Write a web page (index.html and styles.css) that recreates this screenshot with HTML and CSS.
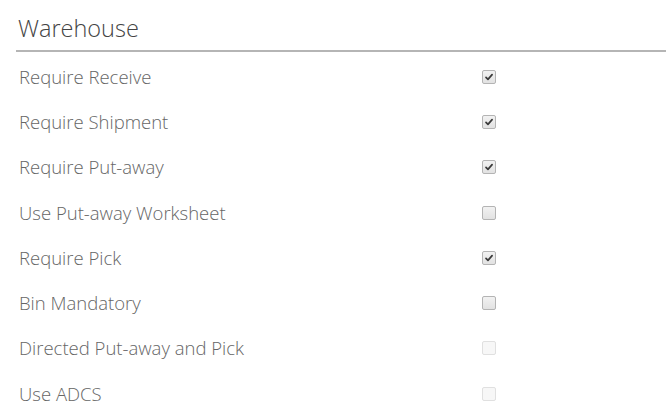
FILE: index.html
```html
<!DOCTYPE html>
<html>
<head>
<meta charset="utf-8">
<link rel="stylesheet" href="styles.css">
</head>
<body>
<section class="group">
  <h1 class="title">Warehouse</h1>
  <div class="rows">
    <div class="row"><span class="label">Require Receive</span><span class="cb checked"><svg viewBox="0 0 14 14"><path d="M3.5 7.4 L5.8 9.8 L10.6 4.2" /></svg></span></div>
    <div class="row"><span class="label">Require Shipment</span><span class="cb checked"><svg viewBox="0 0 14 14"><path d="M3.5 7.4 L5.8 9.8 L10.6 4.2" /></svg></span></div>
    <div class="row"><span class="label">Require Put-away</span><span class="cb checked"><svg viewBox="0 0 14 14"><path d="M3.5 7.4 L5.8 9.8 L10.6 4.2" /></svg></span></div>
    <div class="row"><span class="label">Use Put-away Worksheet</span><span class="cb"></span></div>
    <div class="row"><span class="label">Require Pick</span><span class="cb checked"><svg viewBox="0 0 14 14"><path d="M3.5 7.4 L5.8 9.8 L10.6 4.2" /></svg></span></div>
    <div class="row"><span class="label">Bin Mandatory</span><span class="cb"></span></div>
    <div class="row"><span class="label">Directed Put-away and Pick</span><span class="cb disabled"></span></div>
    <div class="row"><span class="label">Use ADCS</span><span class="cb disabled"></span></div>
  </div>
</section>
</body>
</html>
```
FILE: styles.css
```css
html, body {
  margin: 0;
  padding: 0;
  background: #ffffff;
}
body {
  font-family: "Open Sans", "Noto Sans", sans-serif;
  width: 666px;
  height: 416px;
  overflow: hidden;
}
.group {
  padding: 13px 0 0 16px;
}
.title {
  margin: 0;
  padding: 0 0 7px 2px;
  font-size: 23.5px;
  font-weight: 300;
  line-height: 30px;
  color: #444444;
  border-bottom: 2px solid #b5b5b5;
}
.rows {
  display: flex;
  flex-direction: column;
  padding-top: 2px;
}
.row {
  display: flex;
  align-items: center;
  height: 45.3px;
  padding-left: 3px;
}
.label {
  width: 463px;
  font-size: 18.5px;
  font-weight: 300;
  color: #666666;
  line-height: 22px;
}
.cb {
  width: 12px;
  height: 12px;
  border: 1px solid #b4b4b4;
  border-radius: 2px;
  background: linear-gradient(#f2f2f2, #e2e2e2);
  display: flex;
  align-items: center;
  justify-content: center;
}
.cb svg {
  width: 12px;
  height: 12px;
}
.cb svg path {
  fill: none;
  stroke: #3a3a3a;
  stroke-width: 2;
  stroke-linecap: round;
  stroke-linejoin: round;
}
.cb.disabled {
  border-color: #e0e0e0;
  background: #f7f7f7;
}
```
